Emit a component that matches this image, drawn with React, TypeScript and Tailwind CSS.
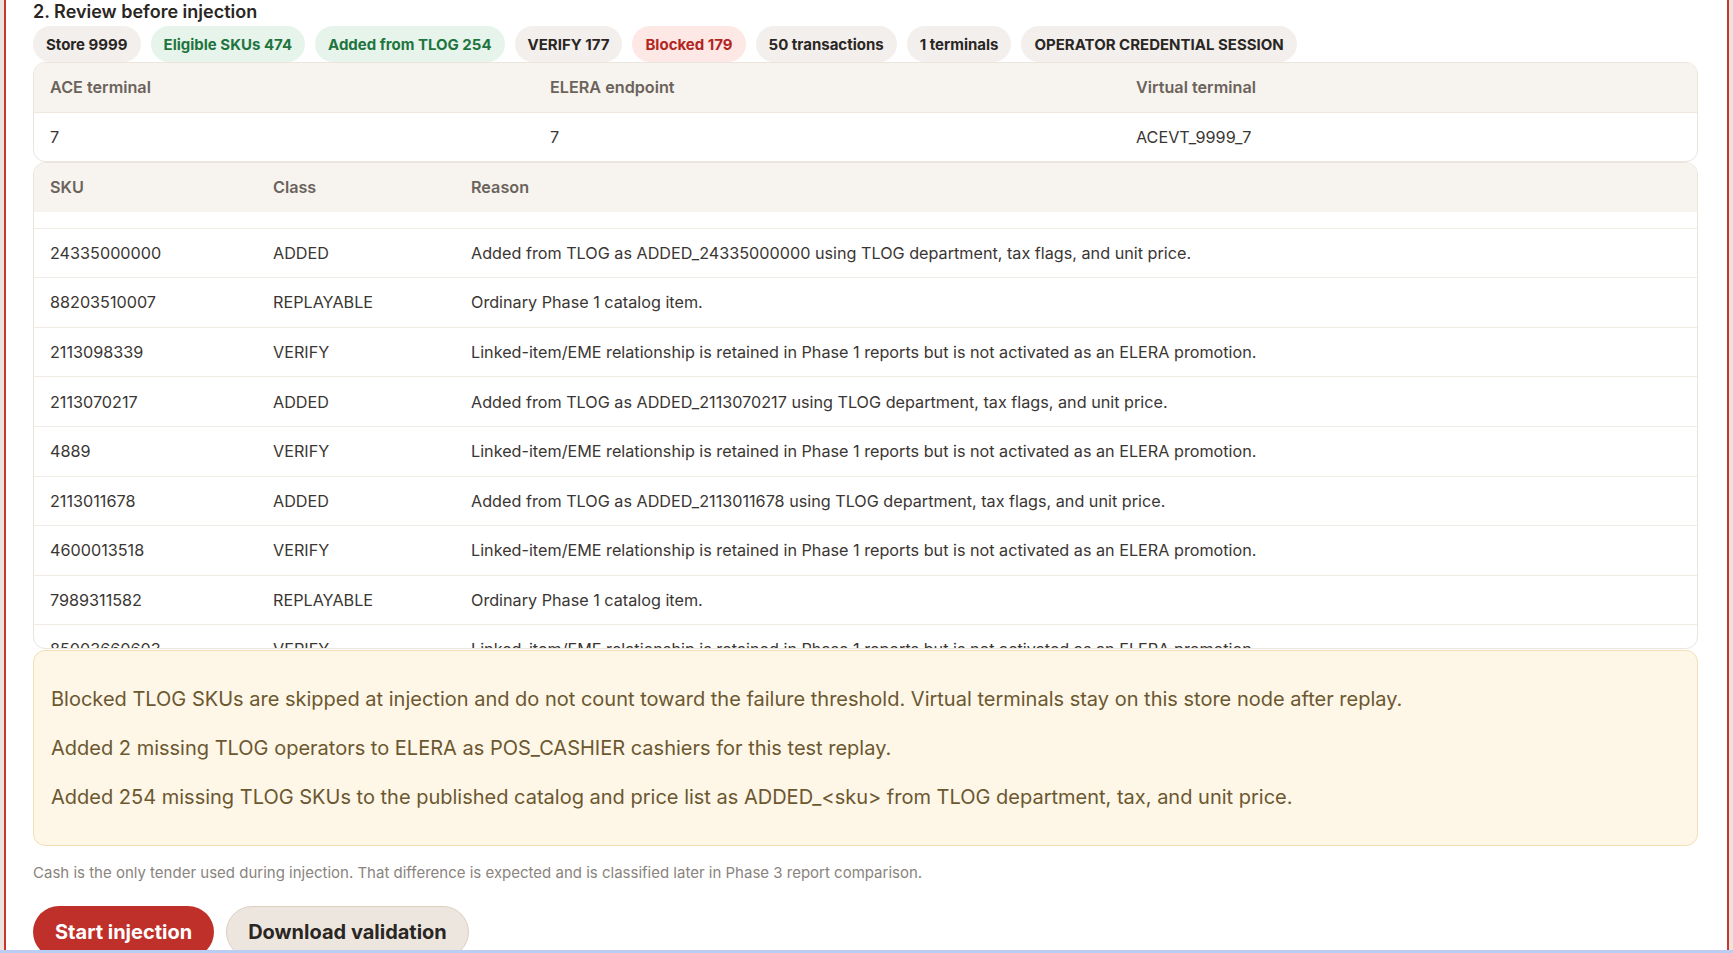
import React from "react";

type Row = { sku: string; cls: string; reason: string };

const LINKED =
  "Linked-item/EME relationship is retained in Phase 1 reports but is not activated as an ELERA promotion.";
const ORDINARY = "Ordinary Phase 1 catalog item.";
const added = (s: string) =>
  `Added from TLOG as ADDED_${s} using TLOG department, tax flags, and unit price.`;

const rows: Row[] = [
  { sku: "24335000000", cls: "ADDED", reason: added("24335000000") },
  { sku: "88203510007", cls: "REPLAYABLE", reason: ORDINARY },
  { sku: "2113098339", cls: "VERIFY", reason: LINKED },
  { sku: "2113070217", cls: "ADDED", reason: added("2113070217") },
  { sku: "4889", cls: "VERIFY", reason: LINKED },
  { sku: "2113011678", cls: "ADDED", reason: added("2113011678") },
  { sku: "4600013518", cls: "VERIFY", reason: LINKED },
  { sku: "7989311582", cls: "REPLAYABLE", reason: ORDINARY },
  { sku: "85003660603", cls: "VERIFY", reason: LINKED },
];

function Chip({ children, tone }: { children: React.ReactNode; tone: "n" | "g" | "r" }) {
  const cls =
    tone === "g"
      ? "bg-[#e7f4eb] text-[#1f7540]"
      : tone === "r"
      ? "bg-[#fde8e6] text-[#b3261e]"
      : "bg-[#f2efec] text-[#2a2623]";
  return (
    <span
      className={`${cls} inline-flex h-[36px] items-center rounded-full px-[13px] text-[15px] font-bold leading-none whitespace-nowrap`}
    >
      {children}
    </span>
  );
}

export default function App() {
  return (
    <div
      className="min-h-screen bg-[#eee2de] px-[4px]"
      style={{ fontFamily: "Inter, 'Noto Sans', sans-serif" }}
    >
      <div className="min-h-screen border-x-2 border-[#c8372e] bg-white pl-[27px] pr-[29px]">
        <h2 className="text-[18px] font-semibold leading-[24px] text-[#2a2623]">
          2. Review before injection
        </h2>

        <div className="mt-[2px] flex flex-wrap gap-[10px]">
          <Chip tone="n">Store 9999</Chip>
          <Chip tone="g">Eligible SKUs 474</Chip>
          <Chip tone="g">Added from TLOG 254</Chip>
          <Chip tone="n">VERIFY 177</Chip>
          <Chip tone="r">Blocked 179</Chip>
          <Chip tone="n">50 transactions</Chip>
          <Chip tone="n">1 terminals</Chip>
          <Chip tone="n">OPERATOR CREDENTIAL SESSION</Chip>
        </div>

        {/* Terminal card */}
        <div className="overflow-hidden rounded-xl border border-[#ebe5de]">
          <div className="grid h-[50px] grid-cols-[500px_586px_1fr] items-center border-b border-[#ede7e0] bg-[#f7f4f0] text-[16.2px] font-semibold text-[#6b635b]">
            <div className="px-4">ACE terminal</div>
            <div className="px-4">ELERA endpoint</div>
            <div className="px-4">Virtual terminal</div>
          </div>
          <div className="grid h-[48px] grid-cols-[500px_586px_1fr] items-center text-[16.2px] text-[#3a3633]">
            <div className="px-4">7</div>
            <div className="px-4">7</div>
            <div className="px-4">ACEVT_9999_7</div>
          </div>
        </div>

        {/* SKU card */}
        <div className="overflow-hidden rounded-xl border border-[#ebe5de]">
          <div className="grid h-[49px] grid-cols-[223px_198px_1fr] items-center bg-[#f7f4f0] text-[16.2px] font-semibold text-[#6b635b]">
            <div className="px-4">SKU</div>
            <div className="px-4">Class</div>
            <div className="px-4">Reason</div>
          </div>
          <div className="h-[436px] overflow-hidden">
            <div className="-mt-[33px]">
              <div className="h-[49.6px] border-b border-[#f1ece6]" />
              {rows.map((r) => (
                <div
                  key={r.sku}
                  className="grid h-[49.6px] grid-cols-[223px_198px_1fr] items-center border-b border-[#f1ece6] text-[16.2px] text-[#3a3633]"
                >
                  <div className="px-4">{r.sku}</div>
                  <div className="px-4">{r.cls}</div>
                  <div className="px-4 whitespace-nowrap">{r.reason}</div>
                </div>
              ))}
            </div>
          </div>
        </div>

        {/* Notice */}
        <div className="mt-px flex flex-col gap-[19px] rounded-xl border border-[#f2dfb6] bg-[#fef6e7] px-[17px] py-[33px] text-[20px] leading-[30px] text-[#6b5830]">
          <p>
            Blocked TLOG SKUs are skipped at injection and do not count toward the failure
            threshold. Virtual terminals stay on this store node after replay.
          </p>
          <p>Added 2 missing TLOG operators to ELERA as POS_CASHIER cashiers for this test replay.</p>
          <p>
            Added 254 missing TLOG SKUs to the published catalog and price list as ADDED_&lt;sku&gt;
            from TLOG department, tax, and unit price.
          </p>
        </div>

        <p className="mt-[17px] text-[15px] leading-[20px] text-[#8a847e]">
          Cash is the only tender used during injection. That difference is expected and is
          classified later in Phase 3 report comparison.
        </p>

        <div className="mt-[23px] flex gap-3">
          <button className="h-[52px] rounded-full bg-[#c0302b] px-[22px] text-[20px] font-bold text-white">
            Start injection
          </button>
          <button className="h-[52px] rounded-full border border-[#dccfc1] bg-[#ede6df] px-[21px] text-[20px] font-bold text-[#2a2623]">
            Download validation
          </button>
        </div>
      </div>
      <div className="fixed bottom-0 left-0 right-0 h-[3px] bg-[#bccdf3]" />
    </div>
  );
}
